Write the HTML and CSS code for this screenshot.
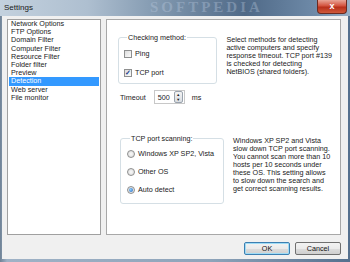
FILE: index.html
```html
<!DOCTYPE html>
<html lang="en">

<head>
    <meta charset="UTF-8">
    <title>Settings</title>
    <link rel="stylesheet" href="styles.css">
</head>

<body>
    <div class="window">
        <!-- title bar -->
        <div class="titlebar">
            <span class="title">Settings</span>
            <span class="mark">SOFTPEDIA</span>
            <span class="close">x</span>
        </div>

        <div class="client">
            <div class="main">
                <!-- page list -->
                <ul class="pages">
                    <li>Network Options</li>
                    <li>FTP Options</li>
                    <li>Domain Filter</li>
                    <li>Computer Filter</li>
                    <li>Resource Filter</li>
                    <li>Folder filter</li>
                    <li>Preview</li>
                    <li class="active">Detection</li>
                    <li>Web server</li>
                    <li>File monitor</li>
                </ul>

                <!-- detection page -->
                <div class="panel">
                    <div class="section">
                        <div class="col">
                            <fieldset class="group g1">
                                <legend>Checking method:</legend>
                                <label class="opt"><span class="check"></span>Ping</label>
                                <label class="opt"><span class="check on">&#10003;</span>TCP port</label>
                            </fieldset>
                            <div class="timeout">
                                <span>Timeout</span>
                                <span class="spin"><span class="val">500</span><span class="arrows"><i>&#9650;</i><i>&#9660;</i></span></span>
                                <span class="ms">ms</span>
                            </div>
                        </div>
                        <p class="hint">Select methods for detecting<br>active computers and specify<br>response timeout. TCP port #139<br>is checked for detecting<br>NetBIOS (shared folders).</p>
                    </div>

                    <div class="section s2">
                        <fieldset class="group g2">
                            <legend>TCP port scanning:</legend>
                            <label class="opt"><span class="radio"></span>Windows XP SP2, Vista</label>
                            <label class="opt"><span class="radio"></span>Other OS</label>
                            <label class="opt"><span class="radio on"></span>Auto detect</label>
                        </fieldset>
                        <p class="hint h2">Windows XP SP2 and Vista<br>slow down TCP port scanning.<br>You cannot scan more than 10<br>hosts per 10 seconds under<br>these OS. This setting allows<br>to slow down the search and<br>get correct scanning results.</p>
                    </div>
                </div>
            </div>

            <div class="buttons">
                <button class="btn default">OK</button>
                <button class="btn">Cancel</button>
            </div>
        </div>
    </div>
</body>

</html>
```

FILE: styles.css
```css
* {
    padding: 0;
    margin: 0;
    list-style: none;
    box-sizing: border-box;
}

body {
    width: 350px;
    height: 262px;
    overflow: hidden;
    font-family: "Liberation Sans", Arial, sans-serif;
    font-size: 7.2px;
    color: #1a1a1a;
}

.window {
    width: 350px;
    height: 262px;
    background: linear-gradient(90deg, #6f8296 0%, #9fb2c6 2%, #8ea4ba 60%, #55708e 100%);
    display: flex;
    flex-direction: column;
}

.titlebar {
    height: 16px;
    position: relative;
    overflow: hidden;
    background: linear-gradient(90deg, #c3d1de 0%, #aebfd0 25%, #8299b0 45%, #4f6987 70%, #6e8aa8 90%, #98b0c6 100%);
}

.titlebar .title {
    position: absolute;
    left: 4px;
    top: 3px;
    font-size: 8px;
    color: #1a1a1a;
}

.titlebar .mark {
    position: absolute;
    left: 150px;
    top: 0;
    font-family: "Liberation Serif", serif;
    font-weight: bold;
    font-size: 15px;
    line-height: 15px;
    letter-spacing: 3px;
    color: rgba(190, 205, 225, 0.35);
}

.titlebar .close {
    position: absolute;
    right: 3px;
    top: 0;
    width: 30px;
    height: 14px;
    border: 1px solid #6b2a20;
    border-top: 0;
    border-radius: 0 0 4px 4px;
    background: linear-gradient(#e8a597 0%, #d3533e 45%, #b8301b 55%, #cf5a3a 100%);
    color: #fff;
    font-weight: bold;
    font-size: 9px;
    text-align: center;
    line-height: 12px;
}

.client {
    flex: 1;
    margin: 0 2px 3px 2px;
    background: #f0f0f0;
    padding: 3px 7px 0 5px;
}

.main {
    display: flex;
    gap: 5px;
    height: 216px;
}

.pages {
    width: 96px;
    height: 216px;
    background: #fff;
    border: 1px solid #a0a0a0;
    padding: 0 1px;
}

.pages li {
    height: 8.2px;
    line-height: 8.2px;
    padding-left: 2px;
    white-space: nowrap;
}

.pages .active {
    background: #3399ff;
    color: #fff;
}

.panel {
    width: 235px;
    height: 216px;
    background: #fff;
    border: 1px solid #a8a8a8;
    padding: 13px 8px 0 11px;
}

.section {
    display: flex;
}

.col {
    width: 101px;
}

.group {
    border: 1px solid #d5dfe5;
    border-radius: 3px;
    padding: 7px 0 0 5px;
}

.group legend {
    padding: 0 1px;
    margin-left: 3px;
}

.g1 {
    height: 51px;
}

.opt {
    display: flex;
    align-items: center;
    height: 9px;
    margin-bottom: 10px;
}

.check {
    width: 8px;
    height: 8px;
    border: 1px solid #8e8f8f;
    background: linear-gradient(135deg, #dcdcdc, #fbfbfb);
    margin-right: 3px;
    font-size: 7px;
    line-height: 6px;
    text-align: center;
    color: #1c3e8c;
    font-weight: bold;
}

.timeout {
    display: flex;
    align-items: center;
    margin-top: 6px;
    padding-left: 2px;
}

.spin {
    display: flex;
    align-items: center;
    width: 31px;
    height: 14px;
    border: 1px solid #c8c8c8;
    margin-left: 8px;
    padding: 0 1px 0 3px;
}

.spin .val {
    flex: 1;
}

.spin .arrows {
    flex-shrink: 0;
    width: 9px;
    height: 12px;
    display: flex;
    flex-direction: column;
    border: 1px solid #9aa3ad;
    border-radius: 2px;
    background: linear-gradient(#f4f4f4, #d9dde2);
}

.spin i {
    flex: 1;
    font-style: normal;
    font-size: 4px;
    line-height: 5px;
    text-align: center;
    color: #222;
}

.ms {
    margin-left: 7px;
}

.hint {
    margin-left: 9px;
    margin-top: 3px;
    line-height: 8px;
    white-space: nowrap;
}

.s2 {
    margin-top: 30px;
}

.g2 {
    width: 104px;
    height: 70px;
    margin-left: 2px;
    padding: 6px 0 0 6px;
}

.g2 .opt {
    margin-bottom: 9px;
}

.radio {
    width: 8px;
    height: 8px;
    border-radius: 50%;
    border: 1px solid #8e8f8f;
    background: radial-gradient(#fafafa, #d6d6d6);
    margin-right: 3px;
    position: relative;
}

.radio.on::after {
    content: "";
    position: absolute;
    left: 1px;
    top: 1px;
    width: 4px;
    height: 4px;
    border-radius: 50%;
    background: radial-gradient(circle at 40% 40%, #8fd0ff, #1c5eb8);
}

.h2 {
    margin-left: 9px;
    margin-top: 3px;
}

.buttons {
    display: flex;
    justify-content: flex-end;
    gap: 5px;
    margin-top: 7px;
}

.btn {
    width: 46px;
    height: 13px;
    font-family: "Liberation Sans", Arial, sans-serif;
    font-size: 7.2px;
    color: #111;
    border: 1px solid #707070;
    border-radius: 2px;
    background: linear-gradient(#f2f2f2 0%, #ebebeb 50%, #dddddd 51%, #cfcfcf 100%);
}

.btn.default {
    border-color: #3c7fb1;
    box-shadow: inset 0 0 0 1px #9fdcf6;
}
```
